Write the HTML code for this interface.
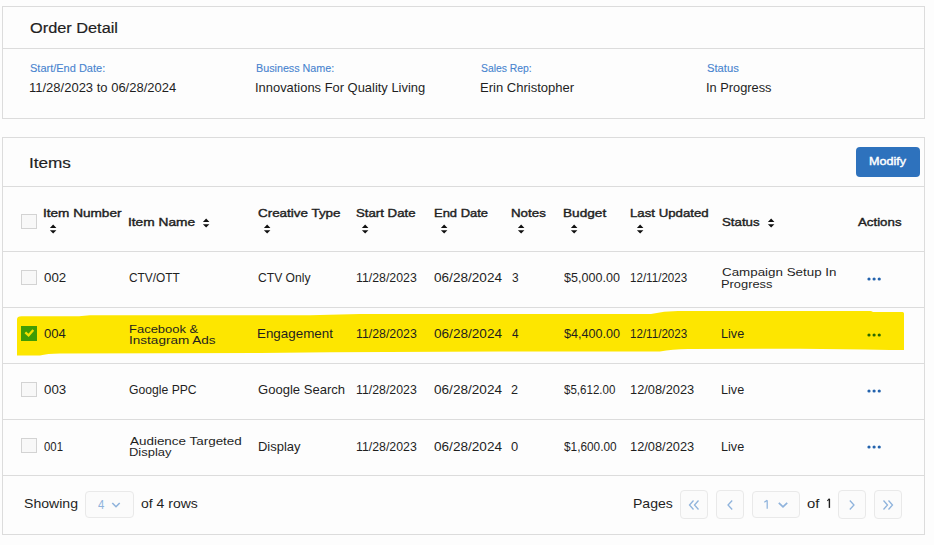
<!DOCTYPE html>
<html><head><meta charset="utf-8"><style>
html,body{margin:0;padding:0}
body{width:934px;height:545px;position:relative;overflow:hidden;background:#fdfdfd;font-family:"Liberation Sans",sans-serif}
.card{position:absolute;left:2px;width:921px;border:1px solid #dcdcdc;background:#fdfdfd}
.t{position:absolute;white-space:pre;line-height:1;transform-origin:0 0}
.si{position:absolute}
.cb{position:absolute;left:21px;width:14px;height:13px;border:1px solid #d3d3d3;background:#f8f8f8}
.pbtn{position:absolute;top:490px;width:26px;height:27px;border:1px solid #e9e9e9;border-radius:4px;background:#fbfbfb}
</style></head><body>
<div class="card" style="top:6px;height:111px"></div>
<div style="position:absolute;left:3px;top:48px;width:921px;height:1px;background:#dcdcdc"></div>
<div class="card" style="top:137px;height:396px"></div>
<div style="position:absolute;left:3px;top:186px;width:921px;height:1px;background:#dcdcdc"></div><div style="position:absolute;left:3px;top:251px;width:921px;height:1px;background:#dcdcdc"></div><div style="position:absolute;left:3px;top:307px;width:921px;height:1px;background:#dcdcdc"></div><div style="position:absolute;left:3px;top:363px;width:921px;height:1px;background:#dcdcdc"></div><div style="position:absolute;left:3px;top:419px;width:921px;height:1px;background:#dcdcdc"></div><div style="position:absolute;left:3px;top:475px;width:921px;height:1px;background:#dcdcdc"></div>
<div style="position:absolute;left:856px;top:147px;width:64px;height:30px;border-radius:4px;background:#2e72bd"></div>
<svg class="si" width="934" height="545" style="left:0;top:0">
<path d="M17 319.5 Q17 316.3 21.5 316.3 L79 316.3 L90 315.3 L310 315.3 L360 314 L651 313.9 Q664 311.2 678 311 L871 311 L873 312 L902.5 312 Q904 312 904 313.5 L904 350 L890 350 L865 349.4 L800 348.8 L688 349 Q672 349.4 660 351.6 L500 351.6 L330 352.3 L260 352.9 L60 353.4 Q47 353.4 40 355.4 L17 355.4 Z" fill="#fde600"/>
</svg>
<div class="cb" style="top:214px"></div><div class="cb" style="top:270px"></div><div class="cb" style="top:382px"></div><div class="cb" style="top:438px"></div>
<div style="position:absolute;left:21px;top:326px;width:16px;height:15px;background:#3f9c04"></div>
<svg class="si" width="16" height="15" style="left:21px;top:326px"><path d="M4.3 6.3 L7.6 9.3 L12.3 4.1" stroke="#f6e200" stroke-width="2.3" fill="none"/></svg>
<svg class="si" width="8" height="10" viewBox="0 0 8 10" style="left:48.5px;top:223.5px"><path d="M0.9 4.1 L4.15 0.4 L7.4 4.1 Z M0.9 6.2 L7.4 6.2 L4.15 9.5 Z" fill="#111"/></svg><svg class="si" width="8" height="10" viewBox="0 0 8 10" style="left:202.3px;top:217.6px"><path d="M0.9 4.1 L4.15 0.4 L7.4 4.1 Z M0.9 6.2 L7.4 6.2 L4.15 9.5 Z" fill="#111"/></svg><svg class="si" width="8" height="10" viewBox="0 0 8 10" style="left:263.0px;top:223.5px"><path d="M0.9 4.1 L4.15 0.4 L7.4 4.1 Z M0.9 6.2 L7.4 6.2 L4.15 9.5 Z" fill="#111"/></svg><svg class="si" width="8" height="10" viewBox="0 0 8 10" style="left:361.3px;top:223.5px"><path d="M0.9 4.1 L4.15 0.4 L7.4 4.1 Z M0.9 6.2 L7.4 6.2 L4.15 9.5 Z" fill="#111"/></svg><svg class="si" width="8" height="10" viewBox="0 0 8 10" style="left:439.5px;top:223.5px"><path d="M0.9 4.1 L4.15 0.4 L7.4 4.1 Z M0.9 6.2 L7.4 6.2 L4.15 9.5 Z" fill="#111"/></svg><svg class="si" width="8" height="10" viewBox="0 0 8 10" style="left:516.5px;top:223.5px"><path d="M0.9 4.1 L4.15 0.4 L7.4 4.1 Z M0.9 6.2 L7.4 6.2 L4.15 9.5 Z" fill="#111"/></svg><svg class="si" width="8" height="10" viewBox="0 0 8 10" style="left:569.5px;top:223.5px"><path d="M0.9 4.1 L4.15 0.4 L7.4 4.1 Z M0.9 6.2 L7.4 6.2 L4.15 9.5 Z" fill="#111"/></svg><svg class="si" width="8" height="10" viewBox="0 0 8 10" style="left:636.2px;top:223.5px"><path d="M0.9 4.1 L4.15 0.4 L7.4 4.1 Z M0.9 6.2 L7.4 6.2 L4.15 9.5 Z" fill="#111"/></svg><svg class="si" width="8" height="10" viewBox="0 0 8 10" style="left:767.3px;top:217.6px"><path d="M0.9 4.1 L4.15 0.4 L7.4 4.1 Z M0.9 6.2 L7.4 6.2 L4.15 9.5 Z" fill="#111"/></svg>
<svg class="si" width="20" height="8" style="left:862px;top:275px"><circle cx="7" cy="4" r="1.6" fill="#2463ad"/><circle cx="12.1" cy="4" r="1.6" fill="#2463ad"/><circle cx="17.25" cy="4" r="1.6" fill="#2463ad"/></svg><svg class="si" width="20" height="8" style="left:862px;top:331px"><circle cx="7" cy="4" r="1.6" fill="#2a6a00"/><circle cx="12.1" cy="4" r="1.6" fill="#2a6a00"/><circle cx="17.25" cy="4" r="1.6" fill="#2a6a00"/></svg><svg class="si" width="20" height="8" style="left:862px;top:387px"><circle cx="7" cy="4" r="1.6" fill="#2463ad"/><circle cx="12.1" cy="4" r="1.6" fill="#2463ad"/><circle cx="17.25" cy="4" r="1.6" fill="#2463ad"/></svg><svg class="si" width="20" height="8" style="left:862px;top:443px"><circle cx="7" cy="4" r="1.6" fill="#2463ad"/><circle cx="12.1" cy="4" r="1.6" fill="#2463ad"/><circle cx="17.25" cy="4" r="1.6" fill="#2463ad"/></svg>
<div style="position:absolute;left:85px;top:491px;width:47px;height:25px;border:1px solid #e9e9e9;border-radius:4px;background:#fbfbfb"></div>
<svg class="si" width="12" height="10" style="left:110px;top:500px"><path d="M2.3 3.0 L6 6.7 L9.7 3.0" stroke="#8fb3dc" stroke-width="1.6" fill="none"/></svg>
<div class="pbtn" style="left:680px"></div>
<svg class="si" width="28" height="28" style="left:680px;top:490px"><path d="M13.5 10.5 L9.5 15 L13.5 19.5 M18.5 10.5 L14.5 15 L18.5 19.5" stroke="#8fb3dc" stroke-width="1.3" fill="none"/></svg>
<div class="pbtn" style="left:716px"></div>
<svg class="si" width="28" height="28" style="left:716px;top:490px"><path d="M16.2 10.5 L12 15 L16.2 19.5" stroke="#8fb3dc" stroke-width="1.3" fill="none"/></svg>
<div style="position:absolute;left:752px;top:491px;width:46px;height:25px;border:1px solid #e9e9e9;border-radius:4px;background:#fbfbfb"></div>
<svg class="si" width="14" height="10" style="left:776px;top:500px"><path d="M2.8 2.8 L7 6.8 L11.2 2.8" stroke="#8fb3dc" stroke-width="1.7" fill="none"/></svg>
<svg class="si" width="20" height="20" style="left:758px;top:494px"><path d="M9.2 6.3 L9.2 14.8 M6.3 8.2 L9.2 6.3" stroke="#8fb3dc" stroke-width="1.25" fill="none"/></svg>
<svg class="si" width="20" height="20" style="left:820px;top:494px"><path d="M9.4 4.7 L9.4 13.9" stroke="#1f1f1f" stroke-width="1.4" fill="none"/><path d="M7.3 6.8 L9.3 4.8" stroke="#1f1f1f" stroke-width="1.1" fill="none"/></svg>
<div class="pbtn" style="left:838px"></div>
<svg class="si" width="28" height="28" style="left:838px;top:490px"><path d="M11.8 10.5 L16 15 L11.8 19.5" stroke="#8fb3dc" stroke-width="1.3" fill="none"/></svg>
<div class="pbtn" style="left:874px"></div>
<svg class="si" width="28" height="28" style="left:874px;top:490px"><path d="M9.5 10.5 L13.5 15 L9.5 19.5 M14.5 10.5 L18.5 15 L14.5 19.5" stroke="#8fb3dc" stroke-width="1.3" fill="none"/></svg>
<div class="t" style="left:29.58px;top:21.00px;font-size:14px;transform:scaleX(1.1656);color:#1f1f1f;-webkit-text-stroke:0.18px #1f1f1f;">Order Detail</div>
<div class="t" style="left:29.95px;top:64.00px;font-size:10px;transform:scaleX(1.1000);color:#4884cf;-webkit-text-stroke:0.1px #4884cf;">Start/End Date:</div>
<div class="t" style="left:28.96px;top:81.00px;font-size:13.2px;transform:scaleX(0.9858);color:#1f1f1f;">11/28/2023 to 06/28/2024</div>
<div class="t" style="left:255.74px;top:64.00px;font-size:10px;transform:scaleX(1.0745);color:#4884cf;-webkit-text-stroke:0.1px #4884cf;">Business Name:</div>
<div class="t" style="left:254.84px;top:81.00px;font-size:13.2px;transform:scaleX(0.9793);color:#1f1f1f;">Innovations For Quality Living</div>
<div class="t" style="left:481.48px;top:64.00px;font-size:10px;transform:scaleX(1.0358);color:#4884cf;-webkit-text-stroke:0.1px #4884cf;">Sales Rep:</div>
<div class="t" style="left:479.96px;top:81.00px;font-size:13.2px;transform:scaleX(0.9881);color:#1f1f1f;">Erin Christopher</div>
<div class="t" style="left:707.14px;top:64.00px;font-size:10px;transform:scaleX(1.1200);color:#4884cf;-webkit-text-stroke:0.1px #4884cf;">Status</div>
<div class="t" style="left:705.85px;top:81.00px;font-size:13.2px;transform:scaleX(0.9716);color:#1f1f1f;">In Progress</div>
<div class="t" style="left:28.96px;top:156.00px;font-size:14px;transform:scaleX(1.2254);color:#1f1f1f;-webkit-text-stroke:0.18px #1f1f1f;">Items</div>
<div class="t" style="left:868.69px;top:156.00px;font-size:10.8px;transform:scaleX(1.1655);color:#ffffff;-webkit-text-stroke:0.4px #ffffff;">Modify</div>
<div class="t" style="left:42.78px;top:208.00px;font-size:11.5px;transform:scaleX(1.1809);color:#1f1f1f;-webkit-text-stroke:0.4px #1f1f1f;">Item Number</div>
<div class="t" style="left:127.97px;top:217.00px;font-size:11.5px;transform:scaleX(1.1929);color:#1f1f1f;-webkit-text-stroke:0.4px #1f1f1f;">Item Name</div>
<div class="t" style="left:257.53px;top:208.00px;font-size:11.5px;transform:scaleX(1.1666);color:#1f1f1f;-webkit-text-stroke:0.4px #1f1f1f;">Creative Type</div>
<div class="t" style="left:356.04px;top:208.00px;font-size:11.5px;transform:scaleX(1.1496);color:#1f1f1f;-webkit-text-stroke:0.4px #1f1f1f;">Start Date</div>
<div class="t" style="left:433.66px;top:208.00px;font-size:11.5px;transform:scaleX(1.1257);color:#1f1f1f;-webkit-text-stroke:0.4px #1f1f1f;">End Date</div>
<div class="t" style="left:510.63px;top:208.00px;font-size:11.5px;transform:scaleX(1.1583);color:#1f1f1f;-webkit-text-stroke:0.4px #1f1f1f;">Notes</div>
<div class="t" style="left:563.21px;top:208.00px;font-size:11.5px;transform:scaleX(1.1858);color:#1f1f1f;-webkit-text-stroke:0.4px #1f1f1f;">Budget</div>
<div class="t" style="left:629.54px;top:208.00px;font-size:11.5px;transform:scaleX(1.1499);color:#1f1f1f;-webkit-text-stroke:0.4px #1f1f1f;">Last Updated</div>
<div class="t" style="left:721.54px;top:217.00px;font-size:11.5px;transform:scaleX(1.1542);color:#1f1f1f;-webkit-text-stroke:0.4px #1f1f1f;">Status</div>
<div class="t" style="left:858.00px;top:217.00px;font-size:11.5px;transform:scaleX(1.1541);color:#1f1f1f;-webkit-text-stroke:0.4px #1f1f1f;">Actions</div>
<div class="t" style="left:43.87px;top:272.00px;font-size:12.8px;transform:scaleX(1.0384);color:#1f1f1f;">002</div>
<div class="t" style="left:128.81px;top:272.00px;font-size:12.8px;transform:scaleX(0.9279);color:#1f1f1f;">CTV/OTT</div>
<div class="t" style="left:257.69px;top:272.00px;font-size:12.8px;transform:scaleX(0.9455);color:#1f1f1f;">CTV Only</div>
<div class="t" style="left:355.71px;top:272.00px;font-size:12.8px;transform:scaleX(0.9632);color:#1f1f1f;">11/28/2023</div>
<div class="t" style="left:434.16px;top:272.00px;font-size:12.8px;transform:scaleX(1.0617);color:#1f1f1f;">06/28/2024</div>
<div class="t" style="left:511.52px;top:272.00px;font-size:12.8px;transform:scaleX(0.9309);color:#1f1f1f;">3</div>
<div class="t" style="left:564.17px;top:272.00px;font-size:12.8px;transform:scaleX(0.9819);color:#1f1f1f;">$5,000.00</div>
<div class="t" style="left:629.67px;top:272.00px;font-size:12.8px;transform:scaleX(0.9063);color:#1f1f1f;">12/11/2023</div>
<div class="t" style="left:721.83px;top:267.00px;font-size:10.8px;transform:scaleX(1.2382);color:#1f1f1f;">Campaign Setup In</div>
<div class="t" style="left:721.47px;top:279.00px;font-size:10.8px;transform:scaleX(1.1901);color:#1f1f1f;">Progress</div>
<div class="t" style="left:43.88px;top:328.00px;font-size:12.8px;transform:scaleX(1.0254);color:#1f1f1f;">004</div>
<div class="t" style="left:129.26px;top:324.00px;font-size:10.8px;transform:scaleX(1.2016);color:#1f1f1f;">Facebook &amp;</div>
<div class="t" style="left:128.98px;top:335.00px;font-size:10.8px;transform:scaleX(1.2552);color:#1f1f1f;">Instagram Ads</div>
<div class="t" style="left:257.23px;top:328.00px;font-size:12.8px;transform:scaleX(1.0459);color:#1f1f1f;">Engagement</div>
<div class="t" style="left:355.71px;top:328.00px;font-size:12.8px;transform:scaleX(0.9632);color:#1f1f1f;">11/28/2023</div>
<div class="t" style="left:434.16px;top:328.00px;font-size:12.8px;transform:scaleX(1.0617);color:#1f1f1f;">06/28/2024</div>
<div class="t" style="left:511.76px;top:328.00px;font-size:12.8px;transform:scaleX(0.9191);color:#1f1f1f;">4</div>
<div class="t" style="left:564.17px;top:328.00px;font-size:12.8px;transform:scaleX(0.9854);color:#1f1f1f;">$4,400.00</div>
<div class="t" style="left:629.67px;top:328.00px;font-size:12.8px;transform:scaleX(0.9063);color:#1f1f1f;">12/11/2023</div>
<div class="t" style="left:720.79px;top:328.00px;font-size:12.8px;transform:scaleX(0.9868);color:#1f1f1f;">Live</div>
<div class="t" style="left:43.87px;top:384.00px;font-size:12.8px;transform:scaleX(1.0384);color:#1f1f1f;">003</div>
<div class="t" style="left:128.79px;top:384.00px;font-size:12.8px;transform:scaleX(0.9512);color:#1f1f1f;">Google PPC</div>
<div class="t" style="left:257.65px;top:384.00px;font-size:12.8px;transform:scaleX(1.0194);color:#1f1f1f;">Google Search</div>
<div class="t" style="left:355.71px;top:384.00px;font-size:12.8px;transform:scaleX(0.9632);color:#1f1f1f;">11/28/2023</div>
<div class="t" style="left:434.16px;top:384.00px;font-size:12.8px;transform:scaleX(1.0617);color:#1f1f1f;">06/28/2024</div>
<div class="t" style="left:511.37px;top:384.00px;font-size:12.8px;transform:scaleX(0.9851);color:#1f1f1f;">2</div>
<div class="t" style="left:564.18px;top:384.00px;font-size:12.8px;transform:scaleX(0.9020);color:#1f1f1f;">$5,612.00</div>
<div class="t" style="left:629.57px;top:384.00px;font-size:12.8px;transform:scaleX(1.0022);color:#1f1f1f;">12/08/2023</div>
<div class="t" style="left:720.79px;top:384.00px;font-size:12.8px;transform:scaleX(0.9868);color:#1f1f1f;">Live</div>
<div class="t" style="left:43.94px;top:441.00px;font-size:12.8px;transform:scaleX(0.8900);color:#1f1f1f;">001</div>
<div class="t" style="left:129.90px;top:436.00px;font-size:10.8px;transform:scaleX(1.2443);color:#1f1f1f;">Audience Targeted</div>
<div class="t" style="left:129.16px;top:447.00px;font-size:10.8px;transform:scaleX(1.2008);color:#1f1f1f;">Display</div>
<div class="t" style="left:257.76px;top:441.00px;font-size:12.8px;transform:scaleX(1.0132);color:#1f1f1f;">Display</div>
<div class="t" style="left:355.71px;top:441.00px;font-size:12.8px;transform:scaleX(0.9632);color:#1f1f1f;">11/28/2023</div>
<div class="t" style="left:434.16px;top:441.00px;font-size:12.8px;transform:scaleX(1.0617);color:#1f1f1f;">06/28/2024</div>
<div class="t" style="left:511.48px;top:441.00px;font-size:12.8px;transform:scaleX(1.0091);color:#1f1f1f;">0</div>
<div class="t" style="left:564.18px;top:441.00px;font-size:12.8px;transform:scaleX(0.9251);color:#1f1f1f;">$1,600.00</div>
<div class="t" style="left:629.57px;top:441.00px;font-size:12.8px;transform:scaleX(1.0022);color:#1f1f1f;">12/08/2023</div>
<div class="t" style="left:720.79px;top:441.00px;font-size:12.8px;transform:scaleX(0.9868);color:#1f1f1f;">Live</div>
<div class="t" style="left:24.40px;top:497.00px;font-size:13.1px;transform:scaleX(1.0753);color:#1f1f1f;">Showing</div>
<div class="t" style="left:97.67px;top:498.00px;font-size:13.1px;transform:scaleX(0.8681);color:#8fb3dc;">4</div>
<div class="t" style="left:140.74px;top:497.00px;font-size:13.1px;transform:scaleX(1.0683);color:#1f1f1f;">of 4 rows</div>
<div class="t" style="left:632.88px;top:497.00px;font-size:13.1px;transform:scaleX(1.0721);color:#1f1f1f;">Pages</div>
<div class="t" style="left:807.21px;top:497.00px;font-size:13.1px;transform:scaleX(1.1305);color:#1f1f1f;">of</div>
</body></html>
